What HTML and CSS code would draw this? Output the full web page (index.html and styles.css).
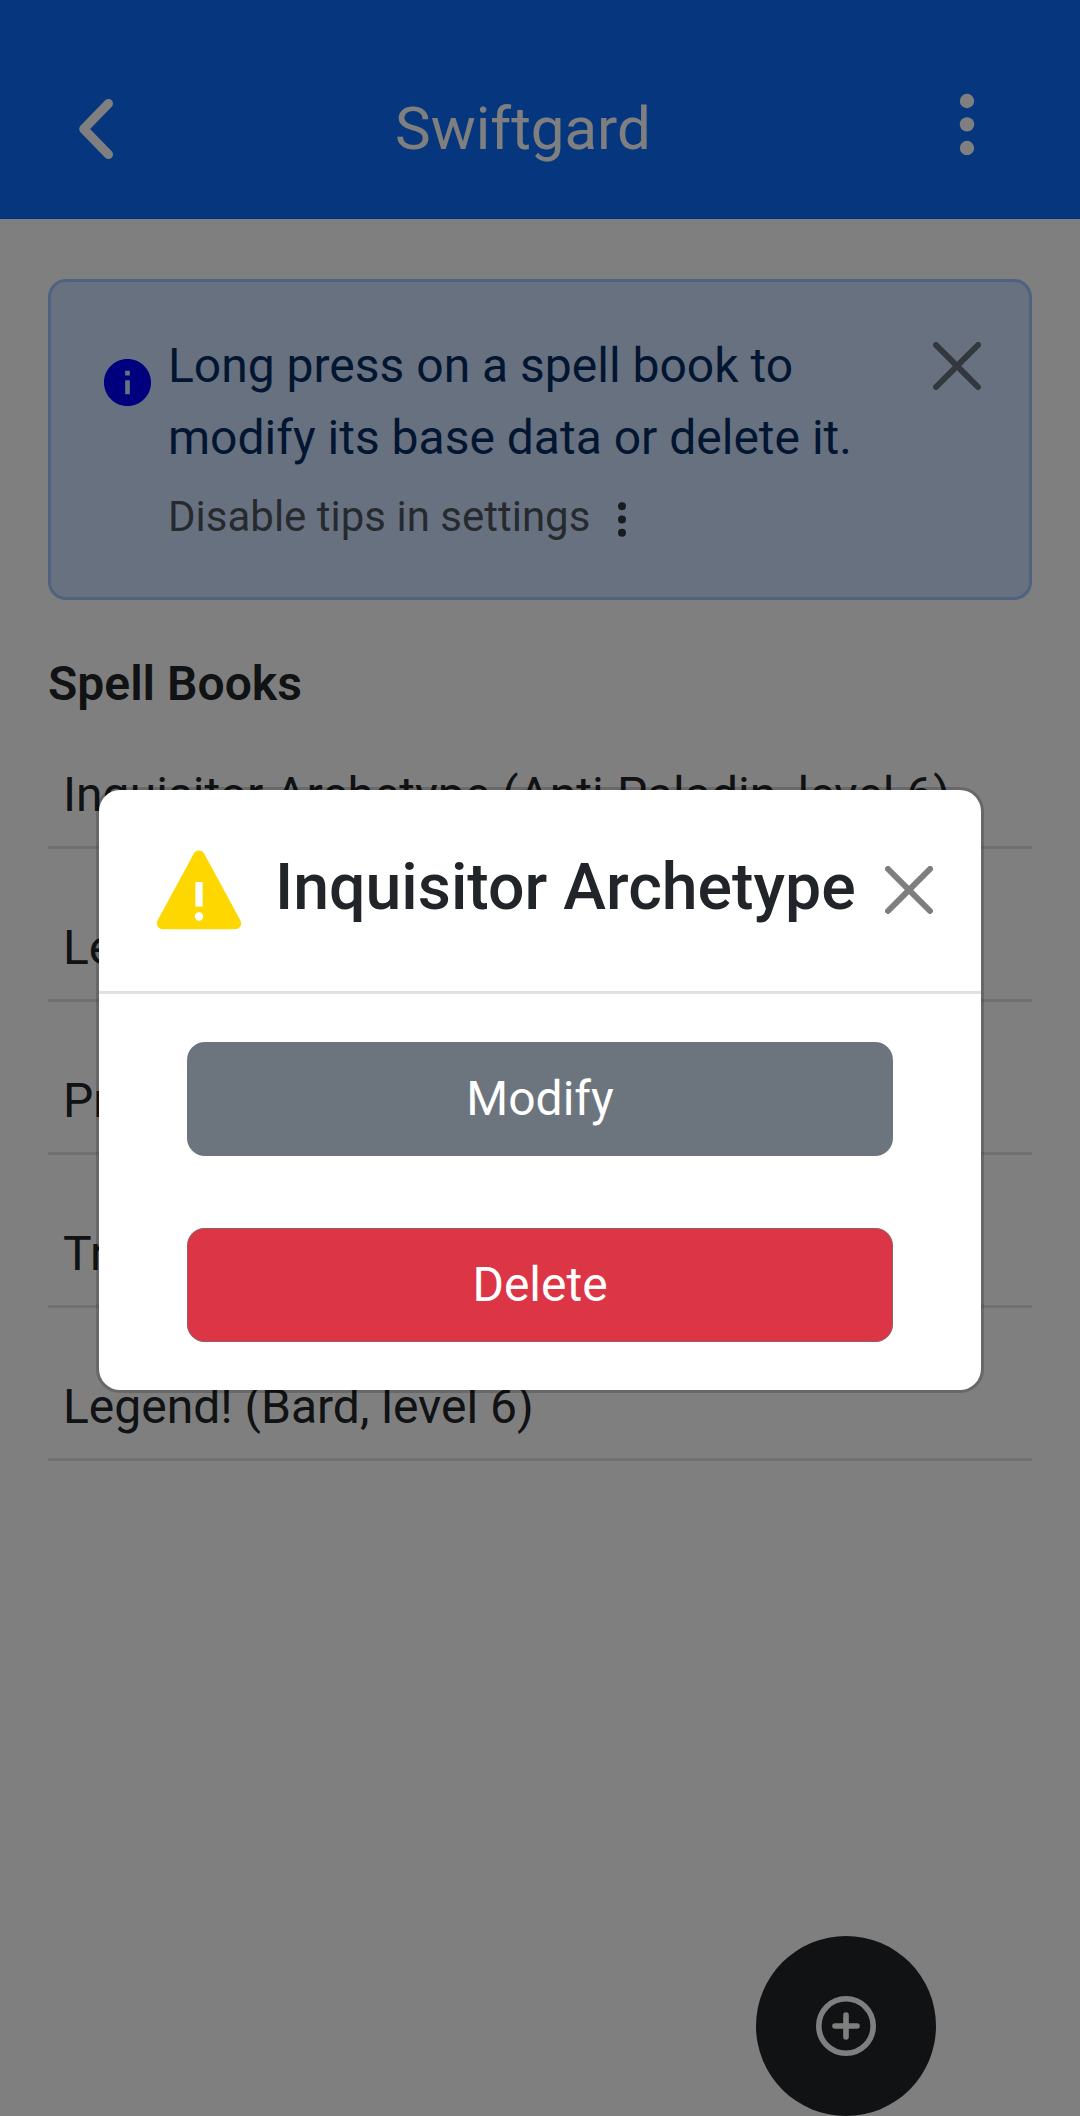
FILE: index.html
```html
<!DOCTYPE html>
<html lang="en">
<head>
<meta charset="utf-8">
<title>Swiftgard</title>
<link rel="stylesheet" href="styles.css">
</head>
<body>
<div class="app">
  <header class="topbar">
    <svg class="back" viewBox="0 0 34 60"><path d="M29.5 4.5 4.7 30l24.8 25.5"/></svg>
    <h1 class="topbar-title">Swiftgard</h1>
    <svg class="menu" viewBox="0 0 16 62"><circle cx="8" cy="8" r="7.2"/><circle cx="8" cy="31.4" r="7.2"/><circle cx="8" cy="55" r="7.2"/></svg>
  </header>
  <main class="content">
    <section class="tip">
      <svg class="tip-icon" viewBox="2 2 20 20"><path d="M12 2C6.48 2 2 6.48 2 12s4.48 10 10 10 10-4.48 10-10S17.52 2 12 2zm1 15h-2v-6h2v6zm0-8h-2V7h2v2z"/></svg>
      <div class="tip-body">
        <p class="tip-text">Long press on a spell book to<br>modify its base data or delete it.</p>
        <p class="tip-note"><span>Disable tips in settings</span>
          <svg class="tip-dots" viewBox="0 0 8 35"><circle cx="4" cy="4.2" r="4"/><circle cx="4" cy="17.5" r="4"/><circle cx="4" cy="30.8" r="4"/></svg>
        </p>
      </div>
      <svg class="close" viewBox="0 0 16 16"><path d="M.293.293a1 1 0 0 1 1.414 0L8 6.586 14.293.293a1 1 0 1 1 1.414 1.414L9.414 8l6.293 6.293a1 1 0 0 1-1.414 1.414L8 9.414l-6.293 6.293a1 1 0 0 1-1.414-1.414L6.586 8 .293 1.707a1 1 0 0 1 0-1.414z"/></svg>
    </section>
    <h2 class="heading">Spell Books</h2>
    <ul class="books">
      <li class="book">Inquisitor Archetype (Anti-Paladin, level 6)</li>
      <li class="book">Le</li>
      <li class="book">Pr</li>
      <li class="book">Tr</li>
      <li class="book">Legend! (Bard, level 6)</li>
    </ul>
  </main>
  <button class="fab">
    <svg class="fab-icon" viewBox="0 0 60 60"><circle cx="30" cy="30" r="27.2"/><path d="M30 19v22M19 30h22"/></svg>
  </button>
</div>
<div class="backdrop">
  <div class="modal">
    <div class="modal-header">
      <svg class="warning" viewBox="0 0 86 80"><path class="warning-shape" d="M43 6.5 6.8 73.3h72.4z"/><path class="warning-bar" d="M39.4 32h7.2v24.6h-7.2z"/><circle class="warning-bar" cx="43" cy="66.5" r="4.2"/></svg>
      <h2 class="modal-title">Inquisitor Archetype</h2>
      <svg class="close" viewBox="0 0 16 16"><path d="M.293.293a1 1 0 0 1 1.414 0L8 6.586 14.293.293a1 1 0 1 1 1.414 1.414L9.414 8l6.293 6.293a1 1 0 0 1-1.414 1.414L8 9.414l-6.293 6.293a1 1 0 0 1-1.414-1.414L6.586 8 .293 1.707a1 1 0 0 1 0-1.414z"/></svg>
    </div>
    <div class="modal-body">
      <button class="btn">Modify</button>
      <button class="btn btn-danger">Delete</button>
    </div>
  </div>
</div>
</body>
</html>
```
FILE: styles.css
```css
* { box-sizing: border-box; }
body {
  margin: 0;
  font-family: Roboto, sans-serif;
  font-size: 48px;
  line-height: 72px;
  color: #212529;
  background: #fff;
}
h1, h2, p, ul { margin: 0; padding: 0; }
svg { display: block; flex: none; }
.app { position: relative; height: 2116px; overflow: hidden; }

.topbar {
  display: flex;
  align-items: flex-start;
  height: 219px;
  padding: 92px 105px 0 79px;
  background: #0d6efd;
  color: #fff;
}
.back { width: 34px; height: 60px; margin-top: 7px; fill: none; stroke: #fff; stroke-width: 9; stroke-linecap: round; stroke-linejoin: round; }
.topbar-title { margin: 1px auto 0 282px; font-size: 60px; font-weight: 400; }
.menu { width: 16px; height: 62px; margin-top: 1px; fill: #fff; }

.content { padding: 60px 48px 0; }
.tip {
  display: flex;
  align-items: flex-start;
  height: 321px;
  padding: 48px 48px 0 53px;
  border: 3px solid #9ec5fe;
  border-radius: 18px;
  background: #cfe2ff;
  color: #052c65;
}
.tip-icon { width: 47px; height: 47px; margin-top: 29px; fill: #00f; }
.tip-body { flex: 1; padding-left: 17px; }
.tip-note {
  display: flex;
  align-items: center;
  gap: 28px;
  margin-top: 11px;
  font-size: 42px;
  line-height: 63px;
  color: rgba(33, 37, 41, .75);
}
.tip-dots { width: 8px; height: 35px; margin-top: 5px; fill: #32383e; }
.close { width: 48px; height: 48px; margin-top: 12px; opacity: .5; }

.heading { margin-top: 48px; font-size: 48px; font-weight: 600; line-height: 72px; }
.books { list-style: none; }
.book { height: 153px; padding: 63px 15px 0; border-bottom: 3px solid #dee2e6; white-space: nowrap; }
.book:first-child { height: 129px; padding-top: 39px; }

.fab {
  position: absolute;
  right: 144px;
  bottom: 0;
  display: grid;
  place-items: center;
  width: 180px;
  height: 180px;
  padding: 0;
  border: 0;
  border-radius: 50%;
  background: #212529;
}
.fab-icon { width: 60px; height: 60px; fill: none; stroke: #fff; stroke-width: 5.6; stroke-linecap: round; }

.backdrop {
  position: absolute;
  inset: 0;
  height: 2116px;
  display: flex;
  justify-content: center;
  align-items: flex-start;
  padding-top: 787px;
  background: rgba(0, 0, 0, .5);
}
.modal {
  width: 888px;
  height: 606px;
  border: 3px solid rgba(0, 0, 0, .175);
  border-radius: 24px;
  background: #fff;
  background-clip: padding-box;
}
.modal-header {
  display: flex;
  align-items: flex-start;
  height: 204px;
  padding: 60px 48px 0 57px;
  border-bottom: 3px solid #dee2e6;
}
.modal-header .close { margin: 16px 0 0 auto; }
.warning { width: 86px; height: 80px; }
.warning-shape { fill: #ffd700; stroke: #ffd700; stroke-width: 12; stroke-linejoin: round; }
.warning-bar { fill: #fff; }
.modal-title { margin: 1px 0 0 33px; font-size: 64.4px; font-weight: 500; white-space: nowrap; }
.modal-body { display: flex; flex-direction: column; align-items: center; gap: 72px; padding-top: 48px; }
.btn {
  width: 706px;
  height: 114px;
  padding: 0;
  border: 0;
  border-radius: 18px;
  background: #6c757d;
  color: #fff;
  font: 48px/72px Roboto, sans-serif;
}
.btn-danger { background: #dc3545; box-shadow: inset 0 0 0 1px rgba(108, 117, 125, .6); }
```
